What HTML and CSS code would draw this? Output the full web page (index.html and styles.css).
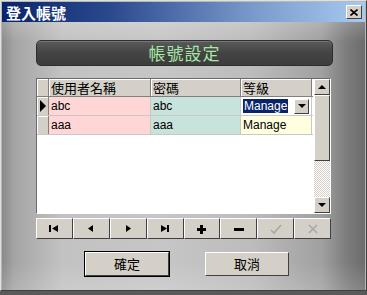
FILE: index.html
```html
<!DOCTYPE html>
<html>
<head>
  <meta charset="utf-8">
  <title>登入帳號</title>
  <link rel="stylesheet" href="styles.css">
</head>
<body>
  <div class="window">
    <div class="titlebar">
      <span class="title">登入帳號</span>
      <span class="close">
        <svg width="8" height="7" viewBox="0 0 8 7"><path d="M0.5 0.5 L7.5 6.5 M7.5 0.5 L0.5 6.5" stroke="#000" stroke-width="1.6" fill="none"/></svg>
      </span>
    </div>

    <div class="content">
      <div class="heading">帳號設定</div>

      <div class="grid">
        <div class="table">
          <div class="row head">
            <div class="ind"></div>
            <div class="cell">使用者名稱</div>
            <div class="cell">密碼</div>
            <div class="cell">等級</div>
          </div>
          <div class="row">
            <div class="ind"><span class="arrow"></span></div>
            <div class="cell user">abc</div>
            <div class="cell pwd">abc</div>
            <div class="cell level edit">
              <span class="sel">Manage</span>
              <span class="drop"><span class="tri-down"></span></span>
            </div>
          </div>
          <div class="row">
            <div class="ind"></div>
            <div class="cell user">aaa</div>
            <div class="cell pwd">aaa</div>
            <div class="cell level">Manage</div>
          </div>
        </div>
        <div class="vscroll">
          <div class="sbtn"><span class="tri-up"></span></div>
          <div class="thumb"></div>
          <div class="track"></div>
          <div class="sbtn"><span class="tri-down"></span></div>
        </div>
      </div>

      <div class="nav">
        <div class="nbtn">
          <svg width="12" height="9" viewBox="0 0 12 9"><rect x="1" y="1" width="2" height="7"/><polygon points="4,4.5 10,1 10,8"/></svg>
        </div>
        <div class="nbtn">
          <svg width="12" height="9" viewBox="0 0 12 9"><polygon points="3,4.5 8,1 8,8"/></svg>
        </div>
        <div class="nbtn">
          <svg width="12" height="9" viewBox="0 0 12 9"><polygon points="4,1 9,4.5 4,8"/></svg>
        </div>
        <div class="nbtn">
          <svg width="12" height="9" viewBox="0 0 12 9"><polygon points="2,1 8,4.5 2,8"/><rect x="8" y="1" width="2" height="7"/></svg>
        </div>
        <div class="nbtn">
          <svg width="12" height="10" viewBox="0 0 12 10"><rect x="1" y="4" width="9" height="3"/><rect x="4" y="1" width="3" height="9"/></svg>
        </div>
        <div class="nbtn">
          <svg width="12" height="10" viewBox="0 0 12 10"><rect x="1" y="4" width="10" height="3"/></svg>
        </div>
        <div class="nbtn off">
          <svg width="14" height="12" viewBox="0 0 14 12"><path d="M2 7 L5 10 L12 2" fill="none" stroke="#a8a8a8" stroke-width="1.6"/></svg>
        </div>
        <div class="nbtn off">
          <svg width="12" height="12" viewBox="0 0 12 12"><path d="M2 2 L10 10 M10 2 L2 10" fill="none" stroke="#a8a8a8" stroke-width="1.6"/></svg>
        </div>
      </div>

      <div class="buttons">
        <div class="btn default">確定</div>
        <div class="btn">取消</div>
      </div>
    </div>
  </div>
</body>
</html>
```

FILE: styles.css
```css
body { margin: 0; width: 367px; height: 295px; overflow: hidden; font-family: "Liberation Sans", "Noto Sans CJK TC", sans-serif; font-size: 12px; background: #5a5a5a; }

.window { width: 367px; height: 291px; box-sizing: border-box; border-top: 1px solid #e0e0e0; border-left: 1px solid #e0e0e0; border-right: 1px solid #404040; border-bottom: 1px solid #404040; display: flex; flex-direction: column; background: #b8b8b8; }

.titlebar { height: 20px; margin: 1px 1px 0 1px; background: linear-gradient(to right, #0a246a 0%, #2a4a8e 30%, #7a9ccc 70%, #a6caf0 100%); display: flex; align-items: center; justify-content: space-between; padding: 0 3px 0 4px; }
.title { color: #fff; font-weight: bold; font-size: 15px; font-family: "Noto Sans CJK TC", sans-serif; }
.close { width: 16px; height: 14px; box-sizing: border-box; background: #d4d0c8; border: 1px solid; border-color: #fff #404040 #404040 #fff; display: flex; align-items: center; justify-content: center; }

.content { flex: 1; margin: 0 1px 0 1px; padding: 18px 0 0 34px; background:
  linear-gradient(to bottom, rgba(255,255,255,0.18) 0, rgba(255,255,255,0) 20px, rgba(0,0,0,0) 240px, rgba(255,255,255,0.15) 100%),
  linear-gradient(to right, #8a8a8a 0, #a4a4a4 12px, #c2c2c2 60px, #c6c6c6 160px, #bcbcbc 250px, #a0a0a0 320px, #7c7c7c 345px, #6c6c6c 100%); }

.heading { width: 297px; height: 26px; box-sizing: border-box; border-radius: 5px; background: linear-gradient(to bottom, #5a5a5a, #444 50%, #3c3c3c); border: 1px solid #2e2e2e; box-shadow: inset 0 1px 0 #777; color: #a6e8a6; font-family: "Noto Sans CJK TC", sans-serif; font-size: 17px; text-align: center; line-height: 24px; letter-spacing: 1px; }

.grid { margin-top: 12px; width: 295px; height: 136px; box-sizing: border-box; border: 1px solid; border-color: #6a6a6a #fff #fff #6a6a6a; display: flex; background: #fff; }
.table { width: 277px; }
.row { display: grid; grid-template-columns: 12px 102px 90px 71px; height: 18px; border-bottom: 1px solid #c8c8c8; }
.row.head { height: 17px; border-bottom: 1px solid #808080; }
.ind { background: #d4d0c8; border-right: 1px solid #808080; box-shadow: inset 1px 1px 0 #fff; display: flex; align-items: center; justify-content: center; }
.arrow { width: 0; height: 0; border-top: 6px solid transparent; border-bottom: 6px solid transparent; border-left: 6px solid #000; }
.cell { padding-left: 2px; line-height: 18px; border-right: 1px solid #c8c8c8; white-space: nowrap; overflow: hidden; }
.head .cell { background: #d4d0c8; border-right: 1px solid #808080; box-shadow: inset 1px 1px 0 #fff; font-family: "Noto Sans CJK TC", sans-serif; font-size: 13px; line-height: 17px; }
.user { background: #ffd6d6; }
.pwd { background: #c8e2dc; }
.level { background: #ffffe0; }
.edit { background: #fff; display: flex; align-items: center; justify-content: space-between; padding-right: 2px; }
.sel { background: #0a246a; color: #fff; line-height: 14px; padding: 0 1px; }
.drop { width: 15px; height: 15px; box-sizing: border-box; background: #d4d0c8; border: 1px solid; border-color: #fff #404040 #404040 #fff; display: flex; align-items: center; justify-content: center; }

.vscroll { width: 16px; margin-left: 1px; display: flex; flex-direction: column; background: #d4d0c8; }
.sbtn { height: 16px; box-sizing: border-box; background: #d4d0c8; border: 1px solid; border-color: #fff #404040 #404040 #fff; display: flex; align-items: center; justify-content: center; }
.thumb { height: 66px; box-sizing: border-box; background: #d4d0c8; border: 1px solid; border-color: #fff #404040 #404040 #fff; }
.track { flex: 1; background-color: #fff; background-image: repeating-conic-gradient(#d4d0c8 0 25%, #fff 0 50%); background-size: 2px 2px; }
.tri-up { width: 0; height: 0; border-left: 4px solid transparent; border-right: 4px solid transparent; border-bottom: 4px solid #000; }
.tri-down { width: 0; height: 0; border-left: 4px solid transparent; border-right: 4px solid transparent; border-top: 4px solid #000; }

.nav { margin-top: 4px; width: 295px; display: flex; }
.nbtn { flex: 1; height: 21px; box-sizing: border-box; background: #d4d0c8; border: 1px solid; border-color: #fff #404040 #404040 #fff; display: flex; align-items: center; justify-content: center; }
.nbtn svg { fill: #000; }

.buttons { margin-top: 13px; padding-left: 49px; display: flex; gap: 36px; }
.btn { width: 84px; height: 24px; box-sizing: border-box; background: #d4d0c8; border: 1px solid; border-color: #fff #404040 #404040 #fff; font-family: "Noto Sans CJK TC", sans-serif; font-size: 13px; line-height: 22px; text-align: center; }
.btn.default { outline: 1px solid #000; }
```
